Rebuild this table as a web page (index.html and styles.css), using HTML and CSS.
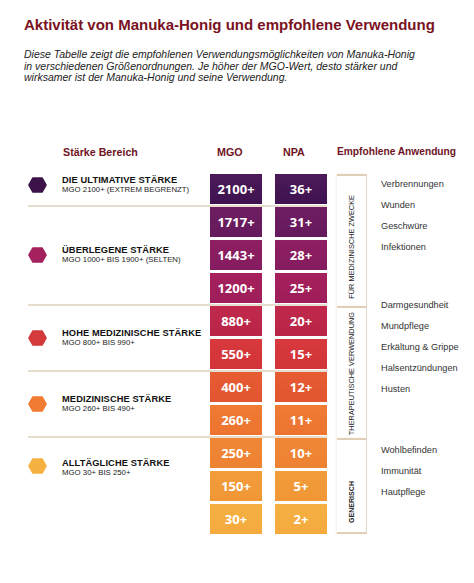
FILE: index.html
```html
<!DOCTYPE html>
<html lang="de">
<head>
<meta charset="utf-8">
<title>Manuka-Honig</title>
<link rel="stylesheet" href="styles.css">
</head>
<body>
<h1 class="title">Aktivität von Manuka-Honig und empfohlene Verwendung</h1>
<p class="intro">Diese Tabelle zeigt die empfohlenen Verwendungsmöglichkeiten von Manuka-Honig<br>in verschiedenen Größenordnungen. Je höher der MGO-Wert, desto stärker und<br>wirksamer ist der Manuka-Honig und seine Verwendung.</p>

<div class="chart">
  <div class="head">
    <span class="h-range">Stärke Bereich</span>
    <span class="h-mgo">MGO</span>
    <span class="h-npa">NPA</span>
    <span class="h-use">Empfohlene Anwendung</span>
  </div>

  <div class="band">
    <div class="groups">
      <div class="group">
        <div class="label label-up">
          <svg class="hex hex-1" viewBox="0 0 19 16"><polygon points="5,1 14,1 18,8 14,15 5,15 1,8"/></svg>
          <div class="ltext"><div class="ltitle">DIE ULTIMATIVE STÄRKE</div><div class="lsub">MGO 2100+ (EXTREM BEGRENZT)</div></div>
        </div>
        <div class="col"><div class="cell c0">2100+</div></div>
        <div class="col"><div class="cell c0">36+</div></div>
      </div>
      <div class="group">
        <div class="label">
          <svg class="hex hex-2" viewBox="0 0 19 16"><polygon points="5,1 14,1 18,8 14,15 5,15 1,8"/></svg>
          <div class="ltext"><div class="ltitle">ÜBERLEGENE STÄRKE</div><div class="lsub">MGO 1000+ BIS 1900+ (SELTEN)</div></div>
        </div>
        <div class="col"><div class="cell c1">1717+</div><div class="cell c2">1443+</div><div class="cell c3">1200+</div></div>
        <div class="col"><div class="cell c1">31+</div><div class="cell c2">28+</div><div class="cell c3">25+</div></div>
      </div>
    </div>
    <div class="vbox vbox-1"><span class="vtext">FÜR MEDIZINISCHE ZWECKE</span></div>
    <ul class="uses uses-1">
      <li>Verbrennungen</li><li>Wunden</li><li>Geschwüre</li><li>Infektionen</li>
    </ul>
  </div>

  <div class="band">
    <div class="groups">
      <div class="group">
        <div class="label">
          <svg class="hex hex-3" viewBox="0 0 19 16"><polygon points="5,1 14,1 18,8 14,15 5,15 1,8"/></svg>
          <div class="ltext"><div class="ltitle">HOHE MEDIZINISCHE STÄRKE</div><div class="lsub">MGO 800+ BIS 990+</div></div>
        </div>
        <div class="col"><div class="cell c4">880+</div><div class="cell c5">550+</div></div>
        <div class="col"><div class="cell c4">20+</div><div class="cell c5">15+</div></div>
      </div>
      <div class="group">
        <div class="label">
          <svg class="hex hex-4" viewBox="0 0 19 16"><polygon points="5,1 14,1 18,8 14,15 5,15 1,8"/></svg>
          <div class="ltext"><div class="ltitle">MEDIZINISCHE STÄRKE</div><div class="lsub">MGO 260+ BIS 490+</div></div>
        </div>
        <div class="col"><div class="cell c6">400+</div><div class="cell c7">260+</div></div>
        <div class="col"><div class="cell c6">12+</div><div class="cell c7">11+</div></div>
      </div>
    </div>
    <div class="vbox vbox-2"><span class="vtext">THERAPEUTISCHE VERWENDUNG</span></div>
    <ul class="uses uses-2">
      <li>Darmgesundheit</li><li>Mundpflege</li><li>Erkältung &amp; Grippe</li><li>Halsentzündungen</li><li>Husten</li>
    </ul>
  </div>

  <div class="band">
    <div class="groups">
      <div class="group group-last">
        <div class="label label-top">
          <svg class="hex hex-5" viewBox="0 0 19 16"><polygon points="5,1 14,1 18,8 14,15 5,15 1,8"/></svg>
          <div class="ltext"><div class="ltitle">ALLTÄGLICHE STÄRKE</div><div class="lsub">MGO 30+ BIS 250+</div></div>
        </div>
        <div class="col"><div class="cell c8">250+</div><div class="cell c9">150+</div><div class="cell c10">30+</div></div>
        <div class="col"><div class="cell c8">10+</div><div class="cell c9">5+</div><div class="cell c10">2+</div></div>
      </div>
    </div>
    <div class="vbox vbox-3"><span class="vtext vtext-bold">GENERISCH</span></div>
    <ul class="uses uses-3">
      <li>Wohlbefinden</li><li>Immunität</li><li>Hautpflege</li>
    </ul>
  </div>
</div>
</body>
</html>
```

FILE: styles.css
```css
* { box-sizing: border-box; }

body {
  margin: 0;
  padding: 0 0 0 24px;
  background: #ffffff;
  font-family: "Liberation Sans", Arial, sans-serif;
  color: #1a1a1a;
}

.title {
  margin: 16px 0 0 0;
  font-size: 15px;
  line-height: 18px;
  font-weight: bold;
  color: #7a1222;
}

.intro {
  margin: 15px 0 0 0;
  font-size: 10.5px;
  line-height: 11.7px;
  font-style: italic;
  color: #222;
}

.chart {
  margin: 61px 0 0 4px;
  display: flex;
  flex-direction: column;
}

.head {
  display: flex;
  font-size: 10.7px;
  line-height: 14px;
  font-weight: bold;
  color: #6e1424;
  margin-bottom: 15px;
  white-space: nowrap;
}
.h-range { width: 189px; padding-left: 35px; }
.h-mgo { width: 66px; }
.h-npa { width: 54px; }
.h-use { font-size: 10.2px; }

.band {
  display: flex;
  align-items: stretch;
}

.groups {
  width: 299px;
  display: flex;
  flex-direction: column;
  flex: none;
}

.group {
  display: flex;
  padding-bottom: 1px;
  border-bottom: 2px solid #e7ddcf;
}
.group-last {
  border-bottom: none;
  padding-bottom: 0;
}

.label {
  width: 182px;
  display: flex;
  align-items: center;
}
.label-up { padding-bottom: 9px; }
.label-top { align-items: flex-start; padding-top: 20px; }

.hex {
  width: 19px;
  height: 16px;
  flex: none;
  margin-right: 15px;
}
.hex polygon { stroke-linejoin: round; stroke-width: 1.6; }
.hex-1 polygon { fill: #3b1349; stroke: #3b1349; }
.hex-2 polygon { fill: #a3225d; stroke: #a3225d; }
.hex-3 polygon { fill: #d43a3b; stroke: #d43a3b; }
.hex-4 polygon { fill: #f07b32; stroke: #f07b32; }
.hex-5 polygon { fill: #f6b240; stroke: #f6b240; }

.ltext { white-space: nowrap; }
.ltitle {
  font-size: 9.3px;
  line-height: 10px;
  font-weight: bold;
  color: #111;
  letter-spacing: 0.1px;
}
.lsub {
  font-size: 7.8px;
  line-height: 10px;
  color: #222;
}

.col {
  width: 52px;
  display: flex;
  flex-direction: column;
  gap: 3px;
}
.col + .col { margin-left: 13px; }

.cell {
  height: 30px;
  display: flex;
  align-items: center;
  justify-content: center;
  color: #ffffff;
  font-family: "Open Sans", "Liberation Sans", sans-serif;
  font-weight: 700;
  font-size: 13px;
}
.c0 { background: linear-gradient(#4d1a58, #3e1250); }
.c1 { background: linear-gradient(#701d62, #641a5c); }
.c2 { background: linear-gradient(#8e1f62, #841c5f); }
.c3 { background: linear-gradient(#a6205c, #9d1e5a); }
.c4 { background: linear-gradient(#c1294c, #b82546); }
.c5 { background: linear-gradient(#d8393c, #d13338); }
.c6 { background: linear-gradient(#e65c33, #e2552f); }
.c7 { background: linear-gradient(#ef7b34, #ec7430); }
.c8 { background: linear-gradient(#ef8736, #ed8232); }
.c9 { background: linear-gradient(#f29c3a, #f09636); }
.c10 { background: linear-gradient(#f5b042, #f4aa3e); }

.vbox {
  width: 30px;
  margin-left: 10px;
  flex: none;
  display: flex;
  align-items: center;
  justify-content: center;
  border-top: 2px solid #e2cfb8;
  border-right: 1px solid #e6d7c5;
  box-shadow: -1px 0 2px rgba(200, 185, 165, 0.25);
}
.vbox-1 { padding-top: 12px; }
.vbox-3 { border-bottom: 2px solid #e2cfb8; padding-top: 32px; }

.vtext {
  writing-mode: vertical-rl;
  transform: rotate(180deg);
  font-size: 7.3px;
  color: #222;
  white-space: nowrap;
  letter-spacing: 0.05px;
}
.vtext-bold { font-weight: bold; font-size: 7px; }

.uses {
  list-style: none;
  margin: 0 0 0 14px;
  padding: 0;
  font-size: 9.2px;
  line-height: 21px;
  color: #333;
  white-space: nowrap;
}
.uses-1 { margin-top: 0; }
.uses-2 { margin-top: -11px; }
.uses-3 { margin-top: 2px; }
```
